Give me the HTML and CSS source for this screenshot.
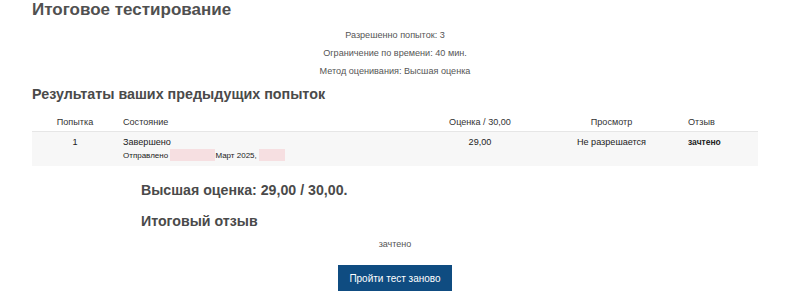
FILE: index.html
```html
<!DOCTYPE html>
<html lang="ru">
<head>
    <meta charset="UTF-8">
    <title>Итоговое тестирование</title>
    <link rel="stylesheet" href="styles.css">
</head>
<body>
    <div class="page">
        <h1>Итоговое тестирование</h1>

        <div class="quizinfo">
            <p>Разрешенно попыток: 3</p>
            <p>Ограничение по времени: 40 мин.</p>
            <p>Метод оценивания: Высшая оценка</p>
        </div>

        <h2>Результаты ваших предыдущих попыток</h2>

        <table class="attempts">
            <thead>
                <tr>
                    <th class="c-num">Попытка</th>
                    <th class="c-state">Состояние</th>
                    <th class="c-grade">Оценка / 30,00</th>
                    <th class="c-review">Просмотр</th>
                    <th class="c-feedback">Отзыв</th>
                </tr>
            </thead>
            <tbody>
                <tr>
                    <td class="c-num">1</td>
                    <td class="c-state">
                        Завершено
                        <span class="submitted">Отправлено <span class="hidden w1"></span>Март 2025, <span class="hidden w2"></span></span>
                    </td>
                    <td class="c-grade">29,00</td>
                    <td class="c-review muted">Не разрешается</td>
                    <td class="c-feedback strong">зачтено</td>
                </tr>
            </tbody>
        </table>

        <div class="summary">
            <h3>Высшая оценка: 29,00 / 30,00.</h3>
            <h3>Итоговый отзыв</h3>
            <p class="feedback">зачтено</p>
        </div>

        <div class="actions">
            <button type="button">Пройти тест заново</button>
        </div>
    </div>
</body>
</html>
```

FILE: styles.css
```css
body { margin: 0; font-family: "Liberation Sans", Arial, sans-serif; color: #333; background: #fff; }
.page { width: 726px; padding: 0 0 0 32px; }

h1 { margin: 0; font-size: 17px; line-height: 20px; font-weight: bold; color: #505050; }
h2 { margin: 4px 0 0; font-size: 14.3px; line-height: 20px; font-weight: bold; color: #4a4a4a; }
h3 { margin: 0; font-size: 14.2px; line-height: 20px; font-weight: bold; color: #4a4a4a; }

.quizinfo { margin-top: 6px; text-align: center; font-size: 9.1px; color: #555; }
.quizinfo p { margin: 0; line-height: 18px; }

.attempts { width: 100%; margin-top: 8px; border-collapse: collapse; font-size: 9.1px; table-layout: fixed; }
.attempts th { font-weight: normal; color: #333; height: 19px; padding: 0 5px; vertical-align: middle; border-bottom: 1px solid #e6e6e6; }
.attempts td { background: #f7f7f7; padding: 5px 5px 5px; vertical-align: top; line-height: 11px; color: #222; }

.c-num { width: 76px; text-align: center; }
.c-state { width: 292px; text-align: left; }
.c-grade { width: 110px; text-align: center; }
.c-review { width: 133px; text-align: center; }
.c-feedback { text-align: left; }

.submitted { display: block; font-size: 8px; margin-top: 1px; }
.hidden { display: inline-block; height: 12px; vertical-align: -3px; background: #f6dfe1; }
.hidden.w1 { width: 45px; }
.hidden.w2 { width: 26px; }

.muted { color: #999; }
.strong { font-weight: bold; font-size: 8.5px; }

.summary { padding: 14px 0 0 109px; }
.summary h3 + h3 { margin-top: 11px; }
.feedback { margin: 7px 0 0; text-align: center; font-size: 9px; line-height: 12px; color: #555; padding-right: 109px; }

.actions { text-align: center; margin-top: 15px; }
button { background: #0f4c81; color: #fff; border: none; font-family: inherit; font-size: 10px; height: 26px; width: 114px; padding: 0; white-space: nowrap; cursor: pointer; }
```
